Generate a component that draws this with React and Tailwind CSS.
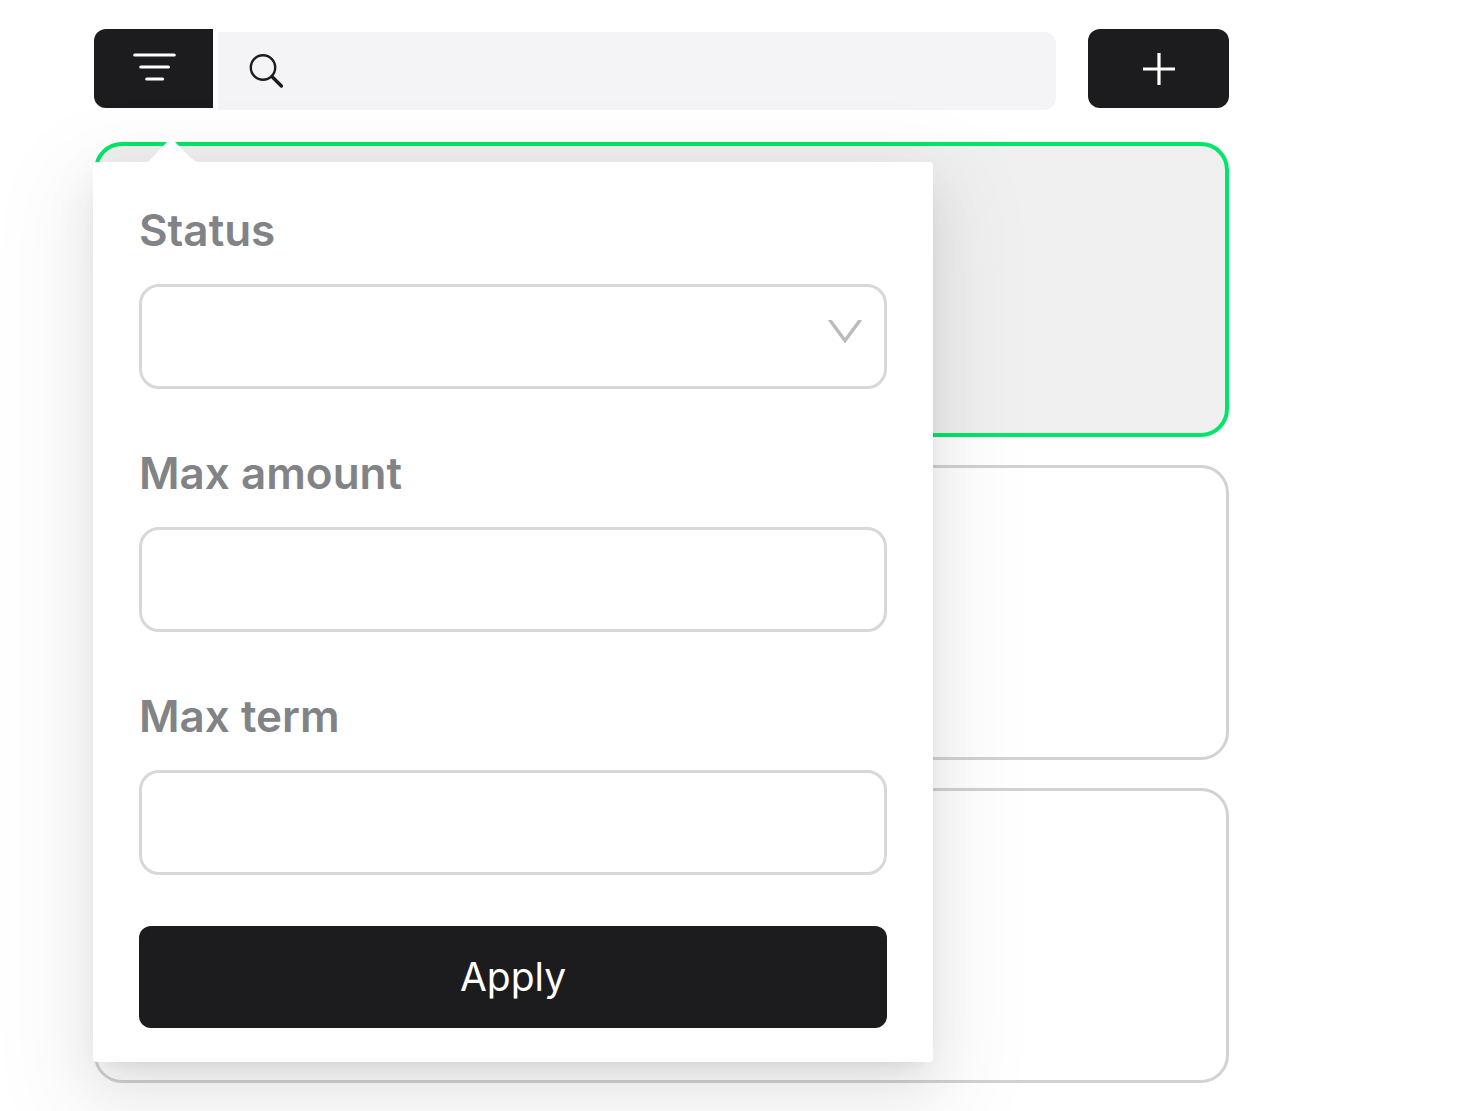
import React from 'react'

const loans = [
    { id: 1, selected: true },
    { id: 2, selected: false },
    { id: 3, selected: false },
]

function FilterIcon() {
    return (
        <svg width="44" height="30" viewBox="0 0 44 30" fill="none" stroke="white" strokeWidth="3.2" strokeLinecap="round" aria-hidden="true">
            <path d="M2.8 3h39.4M8.8 15h27.6M14.8 27h15.8" />
        </svg>
    )
}

function SearchIcon() {
    return (
        <svg width="36" height="36" viewBox="0 0 36 36" fill="none" stroke="#1c1c1e" strokeLinecap="round" aria-hidden="true">
            <circle cx="15" cy="14.5" r="12.2" strokeWidth="2.4" />
            <path d="M24.4 24l9 9" strokeWidth="3.4" />
        </svg>
    )
}

function PlusIcon() {
    return (
        <svg width="34" height="34" viewBox="0 0 34 34" fill="none" stroke="white" strokeWidth="3.2" aria-hidden="true">
            <path d="M17 1v32M1 17h32" />
        </svg>
    )
}

function Toolbar() {
    return (
        <header className="flex items-start">
            <button type="button" aria-label="Filter" className="flex h-[79px] w-[119px] shrink-0 items-center justify-center rounded-l-xl bg-[#1c1c1e] pb-1">
                <FilterIcon />
            </button>
            <label className="mt-[3px] ml-[5px] mr-8 flex h-[78px] min-w-0 flex-1 items-center gap-4 rounded-r-xl bg-[#f4f4f7] px-[30px]">
                <SearchIcon />
                <input type="search" aria-label="Search" className="min-w-0 flex-1 bg-transparent text-[32px] outline-none" />
            </label>
            <button type="button" aria-label="Add" className="flex h-[79px] w-[141px] shrink-0 items-center justify-center rounded-xl bg-[#1c1c1e]">
                <PlusIcon />
            </button>
        </header>
    )
}

function Card({ selected }) {
    return (
        <li
            className={
                selected
                    ? 'h-[295px] rounded-[28px] border-4 border-[#00e668] bg-[#f0f0f0]'
                    : 'h-[295px] rounded-[28px] border-3 border-[#d2d2d2] bg-white'
            }
        />
    )
}

function Field({ id, label, children }) {
    return (
        <div className="flex flex-col gap-[30px]">
            <label htmlFor={id} className="text-[44px] leading-[48px] font-semibold text-[#828386]">
                {label}
            </label>
            {children}
        </div>
    )
}

function FilterPopover() {
    return (
        <form className="absolute top-5 -left-px w-[840px] max-w-full rounded bg-white px-[46px] pt-11 pb-[34px] shadow-[0_10px_20px_-13px_rgba(0,0,0,0.12),0_20px_53px_0_rgba(0,0,0,0.08),0_30px_93px_27px_rgba(0,0,0,0.05)]">
            <svg className="absolute -top-[23px] left-[50px]" width="56" height="24" viewBox="0 0 56 24" fill="white" aria-hidden="true">
                <path d="M0 24C5 23 7 21 9 19L24 3Q28-1 32 3L47 18Q51 22 56 24Z" />
            </svg>

            <div className="flex flex-col gap-[60px]">
                <Field id="status" label="Status">
                    <div className="relative">
                        <select id="status" defaultValue="" className="h-[105px] w-full appearance-none rounded-[20px] border-3 border-[#d8d8d8] bg-white px-6 text-[32px] outline-none">
                            <option value=""></option>
                        </select>
                        <svg className="pointer-events-none absolute top-9 right-[25px]" width="34" height="24" viewBox="0 0 34 24" fill="none" stroke="#bbbbbb" strokeWidth="3.4" aria-hidden="true">
                            <path d="M1.4 -0.4L17 20.6L32.6 -0.4" />
                        </svg>
                    </div>
                </Field>
                <Field id="max-amount" label="Max amount">
                    <input id="max-amount" type="text" className="h-[105px] w-full rounded-[20px] border-3 border-[#d8d8d8] px-6 text-[32px] outline-none" />
                </Field>
                <Field id="max-term" label="Max term">
                    <input id="max-term" type="text" className="h-[105px] w-full rounded-[20px] border-3 border-[#d8d8d8] px-6 text-[32px] outline-none" />
                </Field>
            </div>

            <button type="submit" className="mt-[51px] h-[102px] w-full rounded-xl bg-[#1c1c1e] text-[39px] leading-[48px] text-white">
                Apply
            </button>
        </form>
    )
}

export default function App() {
    return (
        <main className="min-h-screen bg-white pt-[29px] pr-[229px] pb-7 pl-[94px] font-['Inter',sans-serif]">
            <Toolbar />
            <section className="relative mt-8">
                <ul className="flex flex-col gap-7">
                    {loans.map((loan) => (
                        <Card key={loan.id} selected={loan.selected} />
                    ))}
                </ul>
                <FilterPopover />
            </section>
        </main>
    )
}
